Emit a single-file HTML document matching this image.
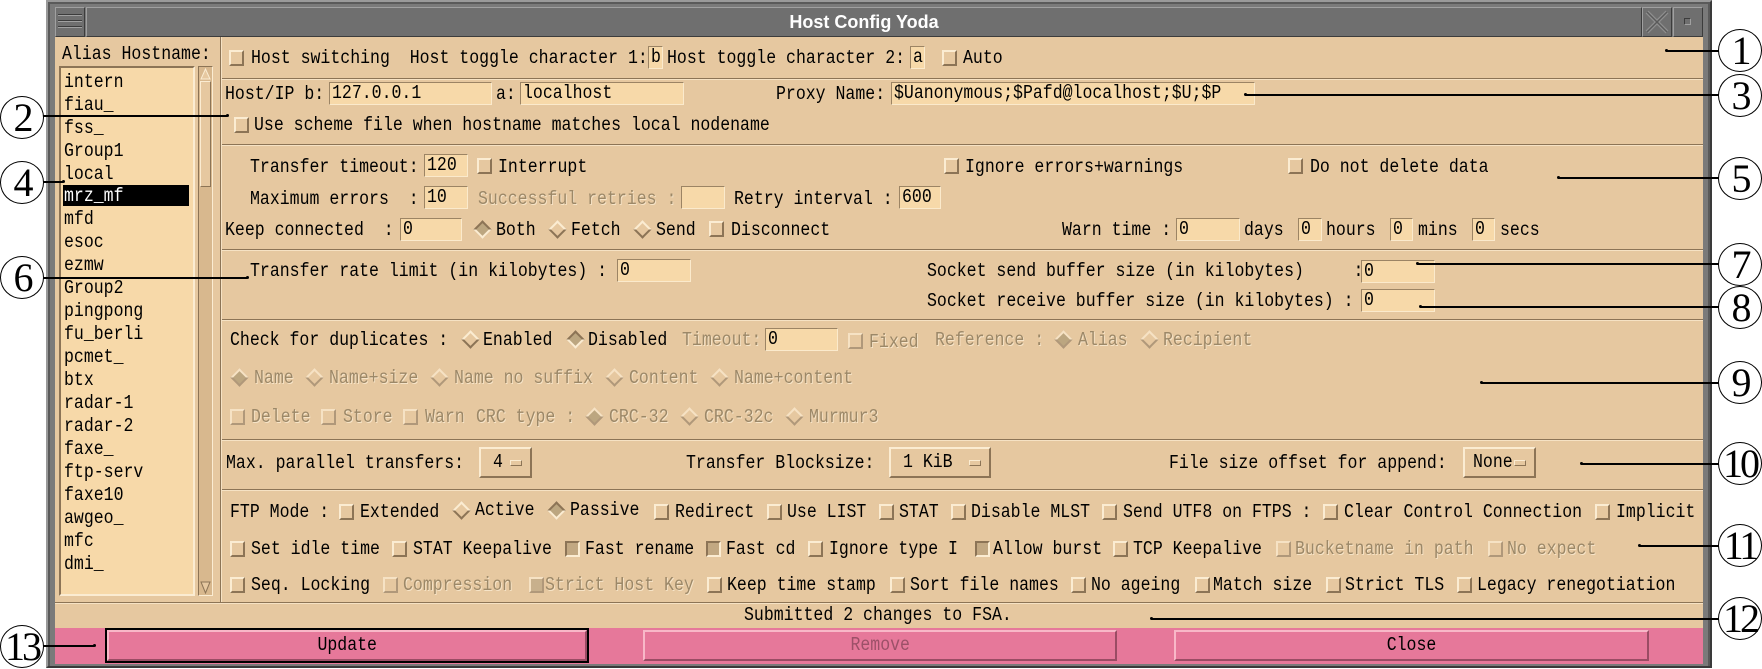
<!DOCTYPE html>
<html><head><meta charset="utf-8"><style>
*{margin:0;padding:0;box-sizing:border-box}
body{width:1762px;height:668px;background:#fff;position:relative;overflow:hidden;font-family:"Liberation Mono",monospace;font-size:19px;color:#000}
div,span,b{position:absolute}
.t,.li{transform:scaleX(.87);transform-origin:0 50%}
.s{position:relative;display:inline-block;transform:scaleX(.87);transform-origin:0 50%}
.sc{position:relative;display:inline-block;transform:scaleX(.87);transform-origin:50% 50%}
.t{white-space:pre;line-height:20px;height:20px}
.g{color:#9c8868;text-shadow:1px 1px 0 #f6e4c8}
.in{background:#f7d9a9;border:1px solid;border-color:#9c8464 #fbeacc #fbeacc #9c8464;height:23px;white-space:pre;line-height:20px;padding-left:2px}
.cb{width:15px;height:16px;background:#e6c8a0;border:2px solid;border-color:#fbecd2 #8c7456 #8c7456 #fbecd2}
.cb.on{background:#c2a882;border-color:#8c7456 #fbecd2 #fbecd2 #8c7456}
.cb.gr{border-color:#f6e2c4 #b0987a #b0987a #f6e2c4}
.dm{width:13px;height:13px;transform:rotate(45deg);border:2px solid;border-color:#fbecd2 #8c7456 #8c7456 #fbecd2;background:#e6c8a0}
.dm.on{background:#bca680;border-color:#8c7456 #fbecd2 #fbecd2 #8c7456}
.dm.gr{border-color:#f6e2c4 #b0987a #b0987a #f6e2c4}
.sep{left:222px;width:1481px;height:2px;border-top:1px solid #8c7456;border-bottom:1px solid #f6e2c4}
.ob{height:31px;border:2px solid;border-color:#fbecd2 #8c7456 #8c7456 #fbecd2;background:#e6c8a0;line-height:26px;white-space:pre;padding-left:12px}
.ob i{position:absolute;right:8px;top:11px;width:12px;height:6px;background:#e6c8a0;border:1px solid;border-color:#fbecd2 #8c7456 #8c7456 #fbecd2}
.btn{top:630px;height:31px;background:#e6789a;border:2px solid;border-color:#f8b8c8 #9a4c64 #9a4c64 #f8b8c8;text-align:center;line-height:27px}
.li{left:64px;line-height:20px;height:21px;white-space:pre}
.c{border:1.5px solid #000;border-radius:50%;width:44px;height:43px;background:#fff;font-family:"Liberation Serif",serif;font-size:40px;text-align:center;line-height:42px;letter-spacing:-3px}
.ln{height:1.5px;background:#000}
.dot{width:3px;height:3px;background:#000;border-radius:50%}
</style></head><body>
<div style="left:46px;top:0;width:1666px;height:668px;background:#5a5a5a;border:2px solid;border-color:#9a9a9a #3a3a3a #3a3a3a #9a9a9a"></div>
<div style="left:50px;top:4px;width:1658px;height:662px;background:#7a7a7a"></div>
<div style="left:55px;top:7px;width:30px;height:30px;background:#6f6f6f;border:1px solid;border-color:#a0a0a0 #3c3c3c #3c3c3c #a0a0a0"></div>
<div style="left:58px;top:14px;width:24px;height:2px;border-top:1px solid #3c3c3c;border-bottom:1px solid #a0a0a0"></div>
<div style="left:58px;top:20px;width:24px;height:2px;border-top:1px solid #3c3c3c;border-bottom:1px solid #a0a0a0"></div>
<div style="left:58px;top:26px;width:24px;height:2px;border-top:1px solid #3c3c3c;border-bottom:1px solid #a0a0a0"></div>
<div style="left:86px;top:7px;width:1556px;height:30px;background:#6f6f6f;border:1px solid;border-color:#a0a0a0 #3c3c3c #3c3c3c #a0a0a0;color:#fff;font-family:'Liberation Sans',sans-serif;font-weight:bold;font-size:18px;text-align:center;line-height:28px">Host Config Yoda</div>
<div style="left:1642px;top:7px;width:30px;height:30px;background:#6f6f6f;border:1px solid;border-color:#a0a0a0 #3c3c3c #3c3c3c #a0a0a0"></div>
<svg style="position:absolute;left:1645px;top:10px" width="24" height="24"><path d="M2 2L22 22M22 2L2 22" stroke="#8e8e8e" stroke-width="4"/><path d="M2 2L22 22M22 2L2 22" stroke="#5a5a5a" stroke-width="1.5"/></svg>
<div style="left:1673px;top:7px;width:30px;height:30px;background:#6f6f6f;border:1px solid;border-color:#a0a0a0 #3c3c3c #3c3c3c #a0a0a0"></div>
<div style="left:1684px;top:18px;width:7px;height:7px;border:1px solid;border-color:#3c3c3c #a0a0a0 #a0a0a0 #3c3c3c"></div>
<div style="left:55px;top:37px;width:1648px;height:591px;background:#e6c8a0"></div>
<div style="left:220px;top:37px;width:2px;height:566px;border-left:1px solid #8c7456;border-right:1px solid #f6e2c4"></div>
<div class="t" style="left:62px;top:44px">Alias Hostname:</div>
<div style="left:59px;top:66px;width:136px;height:530px;background:#f7d9a9;border:2px solid;border-color:#8c7456 #fbecd2 #fbecd2 #8c7456"></div>
<div style="left:198px;top:66px;width:15px;height:530px;background:#d8b88e;border:1px solid;border-color:#8c7456 #fbecd2 #fbecd2 #8c7456"></div>
<svg style="position:absolute;left:200px;top:68px" width="11" height="12"><path d="M5.5 1L1 11H10Z" fill="#e6c8a0" stroke="#fbecd2"/></svg>
<div style="left:200px;top:81px;width:11px;height:106px;background:#e6c8a0;border:1px solid;border-color:#fbecd2 #8c7456 #8c7456 #fbecd2"></div>
<svg style="position:absolute;left:200px;top:581px" width="11" height="13"><path d="M1 1H10L5.5 12Z" fill="#e6c8a0" stroke="#8c7456"/></svg>
<div style="left:63px;top:185px;width:126px;height:21px;background:#000"></div>
<div class="li" style="top:72px">intern</div>
<div class="li" style="top:95px">fiau_</div>
<div class="li" style="top:118px">fss_</div>
<div class="li" style="top:141px">Group1</div>
<div class="li" style="top:164px">local</div>
<div class="li" style="top:186px;color:#fff">mrz_mf</div>
<div class="li" style="top:209px">mfd</div>
<div class="li" style="top:232px">esoc</div>
<div class="li" style="top:255px">ezmw</div>
<div class="li" style="top:278px">Group2</div>
<div class="li" style="top:301px">pingpong</div>
<div class="li" style="top:324px">fu_berli</div>
<div class="li" style="top:347px">pcmet_</div>
<div class="li" style="top:370px">btx</div>
<div class="li" style="top:393px">radar-1</div>
<div class="li" style="top:416px">radar-2</div>
<div class="li" style="top:439px">faxe_</div>
<div class="li" style="top:462px">ftp-serv</div>
<div class="li" style="top:485px">faxe10</div>
<div class="li" style="top:508px">awgeo_</div>
<div class="li" style="top:531px">mfc</div>
<div class="li" style="top:554px">dmi_</div>

<div class="cb" style="left:229px;top:50px"></div>
<div class="t" style="left:251px;top:48px">Host switching  Host toggle character 1:</div>
<div class="in" style="left:648px;top:46px;width:15px"><span class="s">b</span></div>
<div class="t" style="left:667px;top:48px">Host toggle character 2:</div>
<div class="in" style="left:910px;top:46px;width:15px"><span class="s">a</span></div>
<div class="cb" style="left:942px;top:50px"></div>
<div class="t" style="left:963px;top:48px">Auto</div>
<div class="sep" style="top:78px"></div>
<div class="t" style="left:225px;top:84px">Host/IP b:</div>
<div class="in" style="left:329px;top:82px;width:163px"><span class="s">127.0.0.1</span></div>
<div class="t" style="left:496px;top:84px">a:</div>
<div class="in" style="left:520px;top:82px;width:164px"><span class="s">localhost</span></div>
<div class="t" style="left:776px;top:84px">Proxy Name:</div>
<div class="in" style="left:891px;top:82px;width:364px"><span class="s">$Uanonymous;$Pafd@localhost;$U;$P</span></div>
<div class="cb" style="left:234px;top:117px"></div>
<div class="t" style="left:254px;top:115px">Use scheme file when hostname matches local nodename</div>
<div class="sep" style="top:144px"></div>
<div class="t" style="left:250px;top:157px">Transfer timeout:</div>
<div class="in" style="left:424px;top:154px;width:44px"><span class="s">120</span></div>
<div class="cb" style="left:477px;top:158px"></div>
<div class="t" style="left:498px;top:157px">Interrupt</div>
<div class="cb" style="left:944px;top:158px"></div>
<div class="t" style="left:965px;top:157px">Ignore errors+warnings</div>
<div class="cb" style="left:1288px;top:158px"></div>
<div class="t" style="left:1310px;top:157px">Do not delete data</div>
<div class="t" style="left:250px;top:189px">Maximum errors  :</div>
<div class="in" style="left:424px;top:186px;width:44px"><span class="s">10</span></div>
<div class="t g" style="left:478px;top:189px">Successful retries :</div>
<div class="in" style="left:681px;top:186px;width:44px"></div>
<div class="t" style="left:734px;top:189px">Retry interval :</div>
<div class="in" style="left:899px;top:186px;width:42px"><span class="s">600</span></div>
<div class="t" style="left:225px;top:220px">Keep connected  :</div>
<div class="in" style="left:400px;top:218px;width:62px"><span class="s">0</span></div>
<div class="dm on" style="left:476px;top:223px"></div><div class="t" style="left:496px;top:220px">Both</div>
<div class="dm" style="left:551px;top:223px"></div><div class="t" style="left:571px;top:220px">Fetch</div>
<div class="dm" style="left:636px;top:223px"></div><div class="t" style="left:656px;top:220px">Send</div>
<div class="cb" style="left:709px;top:221px"></div><div class="t" style="left:731px;top:220px">Disconnect</div>
<div class="t" style="left:1062px;top:220px">Warn time :</div>
<div class="in" style="left:1176px;top:218px;width:64px"><span class="s">0</span></div>
<div class="t" style="left:1244px;top:220px">days</div>
<div class="in" style="left:1298px;top:218px;width:24px"><span class="s">0</span></div>
<div class="t" style="left:1326px;top:220px">hours</div>
<div class="in" style="left:1390px;top:218px;width:23px"><span class="s">0</span></div>
<div class="t" style="left:1418px;top:220px">mins</div>
<div class="in" style="left:1472px;top:218px;width:23px"><span class="s">0</span></div>
<div class="t" style="left:1500px;top:220px">secs</div>
<div class="sep" style="top:249px"></div>
<div class="t" style="left:250px;top:261px">Transfer rate limit (in kilobytes) :</div>
<div class="in" style="left:617px;top:259px;width:74px"><span class="s">0</span></div>
<div class="t" style="left:927px;top:261px">Socket send buffer size (in kilobytes)     :</div>
<div class="in" style="left:1361px;top:260px;width:74px"><span class="s">0</span></div>
<div class="t" style="left:927px;top:291px">Socket receive buffer size (in kilobytes) :</div>
<div class="in" style="left:1361px;top:289px;width:74px"><span class="s">0</span></div>
<div class="sep" style="top:319px"></div>
<div class="t" style="left:230px;top:330px">Check for duplicates :</div>
<div class="dm" style="left:464px;top:333px"></div><div class="t" style="left:483px;top:330px">Enabled</div>
<div class="dm on" style="left:569px;top:333px"></div><div class="t" style="left:588px;top:330px">Disabled</div>
<div class="t g" style="left:682px;top:330px">Timeout:</div>
<div class="in" style="left:765px;top:328px;width:73px"><span class="s">0</span></div>
<div class="cb gr" style="left:848px;top:333px"></div><div class="t g" style="left:869px;top:332px">Fixed</div>
<div class="t g" style="left:935px;top:330px">Reference :</div>
<div class="dm on gr" style="left:1057px;top:333px;background:#bca680"></div><div class="t g" style="left:1078px;top:330px">Alias</div>
<div class="dm gr" style="left:1143px;top:333px"></div><div class="t g" style="left:1163px;top:330px">Recipient</div>
<div class="dm on gr" style="left:233px;top:371px;background:#bca680"></div><div class="t g" style="left:254px;top:368px">Name</div>
<div class="dm gr" style="left:308px;top:371px"></div><div class="t g" style="left:329px;top:368px">Name+size</div>
<div class="dm gr" style="left:433px;top:371px"></div><div class="t g" style="left:454px;top:368px">Name no suffix</div>
<div class="dm gr" style="left:608px;top:371px"></div><div class="t g" style="left:629px;top:368px">Content</div>
<div class="dm gr" style="left:713px;top:371px"></div><div class="t g" style="left:734px;top:368px">Name+content</div>
<div class="cb gr" style="left:230px;top:409px"></div><div class="t g" style="left:251px;top:407px">Delete</div>
<div class="cb gr" style="left:321px;top:409px"></div><div class="t g" style="left:343px;top:407px">Store</div>
<div class="cb gr" style="left:403px;top:409px"></div><div class="t g" style="left:425px;top:407px">Warn</div>
<div class="t g" style="left:476px;top:407px">CRC type :</div>
<div class="dm on gr" style="left:588px;top:410px;background:#bca680"></div><div class="t g" style="left:609px;top:407px">CRC-32</div>
<div class="dm gr" style="left:683px;top:410px"></div><div class="t g" style="left:704px;top:407px">CRC-32c</div>
<div class="dm gr" style="left:788px;top:410px"></div><div class="t g" style="left:809px;top:407px">Murmur3</div>
<div class="sep" style="top:439px"></div>
<div class="t" style="left:226px;top:453px">Max. parallel transfers:</div>
<div class="ob" style="left:479px;top:447px;width:53px"><span class="s">4</span><i></i></div>
<div class="t" style="left:686px;top:453px">Transfer Blocksize:</div>
<div class="ob" style="left:889px;top:447px;width:102px"><span class="s">1 KiB</span><i></i></div>
<div class="t" style="left:1169px;top:453px">File size offset for append:</div>
<div class="ob" style="left:1463px;top:447px;width:73px;padding-left:8px"><span class="s">None</span><i></i></div>
<div class="sep" style="top:489px"></div>
<div class="t" style="left:230px;top:502px">FTP Mode :</div>
<div class="cb" style="left:339px;top:504px"></div><div class="t" style="left:360px;top:502px">Extended</div>
<div class="dm" style="left:455px;top:504px"></div><div class="t" style="left:475px;top:500px">Active</div>
<div class="dm on" style="left:550px;top:504px"></div><div class="t" style="left:570px;top:500px">Passive</div>
<div class="cb" style="left:654px;top:504px"></div><div class="t" style="left:675px;top:502px">Redirect</div>
<div class="cb" style="left:767px;top:504px"></div><div class="t" style="left:787px;top:502px">Use LIST</div>
<div class="cb" style="left:879px;top:504px"></div><div class="t" style="left:899px;top:502px">STAT</div>
<div class="cb" style="left:951px;top:504px"></div><div class="t" style="left:971px;top:502px">Disable MLST</div>
<div class="cb" style="left:1102px;top:504px"></div><div class="t" style="left:1123px;top:502px">Send UTF8 on FTPS :</div>
<div class="cb" style="left:1323px;top:504px"></div><div class="t" style="left:1344px;top:502px">Clear Control Connection</div>
<div class="cb" style="left:1595px;top:504px"></div><div class="t" style="left:1616px;top:502px">Implicit</div>
<div class="cb" style="left:230px;top:541px"></div><div class="t" style="left:251px;top:539px">Set idle time</div>
<div class="cb" style="left:392px;top:541px"></div><div class="t" style="left:413px;top:539px">STAT Keepalive</div>
<div class="cb on" style="left:565px;top:541px"></div><div class="t" style="left:585px;top:539px">Fast rename</div>
<div class="cb on" style="left:706px;top:541px"></div><div class="t" style="left:726px;top:539px">Fast cd</div>
<div class="cb" style="left:808px;top:541px"></div><div class="t" style="left:829px;top:539px">Ignore type I</div>
<div class="cb on" style="left:975px;top:541px"></div><div class="t" style="left:993px;top:539px">Allow burst</div>
<div class="cb" style="left:1113px;top:541px"></div><div class="t" style="left:1133px;top:539px">TCP Keepalive</div>
<div class="cb gr" style="left:1276px;top:541px"></div><div class="t g" style="left:1295px;top:539px">Bucketname in path</div>
<div class="cb gr" style="left:1488px;top:541px"></div><div class="t g" style="left:1507px;top:539px">No expect</div>
<div class="cb" style="left:230px;top:577px"></div><div class="t" style="left:251px;top:575px">Seq. Locking</div>
<div class="cb gr" style="left:383px;top:577px"></div><div class="t g" style="left:403px;top:575px">Compression</div>
<div class="cb on gr" style="left:529px;top:577px;background:#c8b08c"></div><div class="t g" style="left:545px;top:575px">Strict Host Key</div>
<div class="cb" style="left:707px;top:577px"></div><div class="t" style="left:727px;top:575px">Keep time stamp</div>
<div class="cb" style="left:890px;top:577px"></div><div class="t" style="left:910px;top:575px">Sort file names</div>
<div class="cb" style="left:1071px;top:577px"></div><div class="t" style="left:1091px;top:575px">No ageing</div>
<div class="cb" style="left:1195px;top:577px"></div><div class="t" style="left:1213px;top:575px">Match size</div>
<div class="cb" style="left:1326px;top:577px"></div><div class="t" style="left:1345px;top:575px">Strict TLS</div>
<div class="cb" style="left:1457px;top:577px"></div><div class="t" style="left:1477px;top:575px">Legacy renegotiation</div>
<div style="left:55px;top:602px;width:1648px;height:2px;border-top:1px solid #8c7456;border-bottom:1px solid #f6e2c4"></div>
<div class="t" style="left:744px;top:605px">Submitted 2 changes to FSA.</div>
<div style="left:55px;top:628px;width:1648px;height:36px;background:#e6789a"></div>
<div class="btn" style="left:107px;width:480px;outline:2px solid #000"><span class="sc">Update</span></div>
<div class="btn" style="left:643px;width:474px;color:#9c5068"><span class="sc">Remove</span></div>
<div class="btn" style="left:1174px;width:475px"><span class="sc">Close</span></div>

<div class="ln" style="left:1666px;top:50px;width:54px"></div><div class="dot" style="left:1665px;top:49px"></div>
<div class="c" style="left:1718px;top:29px">1</div>
<div class="ln" style="left:1245px;top:94px;width:475px"></div><div class="dot" style="left:1244px;top:93px"></div>
<div class="c" style="left:1718px;top:74px">3</div>
<div class="ln" style="left:1558px;top:177px;width:162px"></div><div class="dot" style="left:1557px;top:176px"></div>
<div class="c" style="left:1718px;top:157px">5</div>
<div class="ln" style="left:1417px;top:263px;width:303px"></div><div class="dot" style="left:1416px;top:262px"></div>
<div class="c" style="left:1718px;top:243px">7</div>
<div class="ln" style="left:1420px;top:306px;width:300px"></div><div class="dot" style="left:1419px;top:305px"></div>
<div class="c" style="left:1718px;top:286px">8</div>
<div class="ln" style="left:1481px;top:382px;width:239px"></div><div class="dot" style="left:1480px;top:381px"></div>
<div class="c" style="left:1718px;top:361px">9</div>
<div class="ln" style="left:1581px;top:463px;width:139px"></div><div class="dot" style="left:1580px;top:462px"></div>
<div class="c" style="left:1718px;top:442px">10</div>
<div class="ln" style="left:1639px;top:545px;width:81px"></div><div class="dot" style="left:1638px;top:544px"></div>
<div class="c" style="left:1718px;top:524px">11</div>
<div class="ln" style="left:1151px;top:618px;width:569px"></div><div class="dot" style="left:1150px;top:617px"></div>
<div class="c" style="left:1718px;top:597px">12</div>
<div class="ln" style="left:40px;top:115px;width:187px"></div><div class="dot" style="left:226px;top:114px"></div>
<div class="c" style="left:0;top:96px">2</div>
<div class="ln" style="left:40px;top:181px;width:23px"></div><div class="dot" style="left:62px;top:180px"></div>
<div class="c" style="left:0;top:161px">4</div>
<div class="ln" style="left:40px;top:277px;width:207px"></div><div class="dot" style="left:246px;top:276px"></div>
<div class="c" style="left:0;top:256px">6</div>
<div class="ln" style="left:40px;top:645px;width:54px"></div><div class="dot" style="left:93px;top:644px"></div>
<div class="c" style="left:0;top:625px">13</div>
</body></html>
